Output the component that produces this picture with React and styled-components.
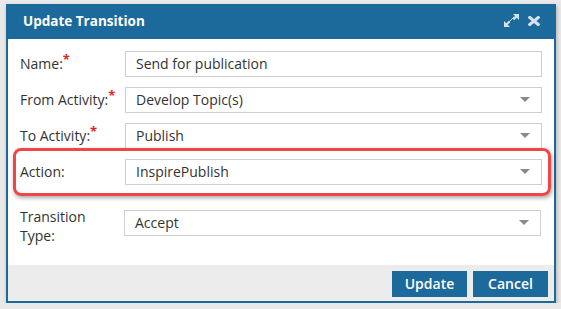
import React from "react";
import styled, { createGlobalStyle } from "styled-components";

const blue = "#1b6a9b";

const GlobalStyle = createGlobalStyle`
  html, body {
    margin: 0;
    padding: 0;
    background: #e9e9e9;
    font-family: "Open Sans", "Liberation Sans", sans-serif;
  }
`;

const Page = styled.div`
  padding: 4px 0 0 6px;
`;

const Dialog = styled.div`
  width: 550px;
  height: 299px;
  box-sizing: border-box;
  border: 2px solid ${blue};
  background: #fff;
  display: flex;
  flex-direction: column;
  box-shadow: 1px 2px 4px rgba(0, 0, 0, 0.25);
`;

const Header = styled.div`
  height: 33px;
  flex: none;
  background: ${blue};
  display: flex;
  align-items: center;
  padding: 0 14px 2px 15px;
  margin-top: -2px;
`;

const Title = styled.div`
  flex: 1;
  color: #fff;
  font-weight: 700;
  font-size: 13.5px;
`;

const IconButton = styled.span`
  display: inline-flex;
  margin-left: ${(p) => p.$gap || 0}px;
  color: #d6e3ec;
`;

const Body = styled.div`
  flex: 1;
  padding: 12px 12px 0 12px;
  display: flex;
  flex-direction: column;
  gap: 10px;
`;

const Row = styled.div`
  position: relative;
  display: flex;
  align-items: ${(p) => (p.$top ? "flex-start" : "center")};
  margin-top: ${(p) => p.$extra || 0}px;
`;

const Highlight = styled.div`
  position: absolute;
  top: -11px;
  bottom: -11px;
  left: -7px;
  right: -9px;
  border: 3px solid #f24545;
  border-radius: 8px;
  box-shadow: 1px 2px 4px rgba(0, 0, 0, 0.35);
  pointer-events: none;
`;

const Label = styled.label`
  width: 105px;
  flex: none;
  color: #333;
  font-size: 14px;
  line-height: ${(p) => (p.$top ? "19px" : "17px")};
  margin-top: ${(p) => (p.$top ? "-3px" : "-1px")};
`;

const Star = styled.sup`
  color: #e52222;
  font-size: 13px;
  font-weight: 700;
  line-height: 0;
  vertical-align: 5px;
`;

const Field = styled.div`
  flex: 1;
  height: 26px;
  box-sizing: border-box;
  border: 1px solid #cfcfcf;
  display: flex;
  align-items: center;
  padding: 0 11px 1px 10px;
  color: #333;
  font-size: 14px;
  margin-left: ${(p) => p.$shift || 0}px;
  margin-right: ${(p) => -(p.$shift || 0)}px;
`;

const Value = styled.span`
  flex: 1;
`;

const Caret = styled.span`
  width: 0;
  height: 0;
  border-left: 5px solid transparent;
  border-right: 5px solid transparent;
  border-top: 5px solid #8a8a8a;
`;

const Footer = styled.div`
  height: 36px;
  flex: none;
  background: #ececec;
  display: flex;
  justify-content: flex-end;
  align-items: flex-start;
  gap: 6px;
  padding: 6px 6px 0 0;
  box-sizing: border-box;
`;

const Button = styled.button`
  width: 75px;
  height: 26px;
  border: none;
  background: ${blue};
  color: #fff;
  font-family: "Open Sans", "Liberation Sans", sans-serif;
  font-size: 14px;
  font-weight: 600;
  padding: 0 0 1px;
`;

const ExpandIcon = () => (
  <svg width="17" height="15" viewBox="0 0 17 15">
    <path d="M10 1h6v6l-2.3-2.3-2.5 2.5-1.4-1.4 2.5-2.5z" fill="currentColor" />
    <path d="M7 14H1V8l2.3 2.3 2.5-2.5 1.4 1.4-2.5 2.5z" fill="currentColor" />
    <path d="M5.5 9.5l6-6" stroke="currentColor" strokeWidth="1" />
  </svg>
);

const CloseIcon = () => (
  <svg width="12" height="10" viewBox="0 0 12 10">
    <path d="M1.8 1.5L10.2 8.5M10.2 1.5L1.8 8.5" stroke="currentColor" strokeWidth="3" strokeLinecap="square" />
  </svg>
);

const fields = [
  { label: "Name:", required: true, value: "Send for publication", select: false },
  { label: "From Activity:", required: true, value: "Develop Topic(s)", select: true },
  { label: "To Activity:", required: true, value: "Publish", select: true },
  { label: "Action:", value: "InspirePublish", select: true, highlight: true },
];

export default function App() {
  return (
    <>
      <GlobalStyle />
      <Page>
        <Dialog>
          <Header>
            <Title>Update Transition</Title>
            <IconButton>
              <ExpandIcon />
            </IconButton>
            <IconButton $gap={8}>
              <CloseIcon />
            </IconButton>
          </Header>
          <Body>
            {fields.map((f) => (
              <Row key={f.label}>
                {f.highlight && <Highlight />}
                <Label>
                  {f.label}
                  {f.required && <Star>*</Star>}
                </Label>
                <Field>
                  <Value>{f.value}</Value>
                  {f.select && <Caret />}
                </Field>
              </Row>
            ))}
            <Row $top $extra={15}>
              <Label $top>
                Transition
                <br />
                Type:
              </Label>
              <Field $shift={-1}>
                <Value>Accept</Value>
                <Caret />
              </Field>
            </Row>
          </Body>
          <Footer>
            <Button>Update</Button>
            <Button>Cancel</Button>
          </Footer>
        </Dialog>
      </Page>
    </>
  );
}
